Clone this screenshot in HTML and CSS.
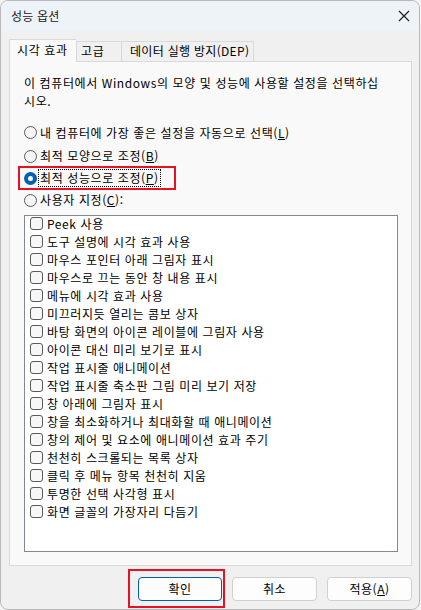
FILE: index.html
```html
<!DOCTYPE html>
<html lang="ko">
<head>
<meta charset="utf-8">
<link rel="stylesheet" href="styles.css">
</head>
<body>
<div class="window">
  <div class="titlebar">
    <span class="title">성능 옵션</span>
    <svg class="close" width="12" height="12" viewBox="0 0 12 12"><path d="M1 1L11 11M11 1L1 11" stroke="#1a1a1a" stroke-width="1.1" fill="none"/></svg>
  </div>
  <div class="content">
    <div class="tabs">
      <div class="tab active">시각 효과</div>
      <div class="tab t2">고급</div>
      <div class="tab t3">데이터 실행 방지(DEP)</div>
    </div>
    <div class="panel">
      <p class="desc">이 컴퓨터에서 Windows의 모양 및 성능에 사용할 설정을 선택하십<br>시오.</p>
      <div class="radios">
        <div class="radio"><span class="dot"></span><span class="lbl">내 컴퓨터에 가장 좋은 설정을 자동으로 선택(<u>L</u>)</span></div>
        <div class="radio"><span class="dot"></span><span class="lbl">최적 모양으로 조정(<u>B</u>)</span></div>
        <div class="radio sel"><span class="dot on"></span><span class="lbl focus">최적 성능으로 조정(<u>P</u>)</span><span class="redbox"></span></div>
        <div class="radio"><span class="dot"></span><span class="lbl">사용자 지정(<u>C</u>):</span></div>
      </div>
      <div class="list">
        <div class="item"><span class="cb"></span>Peek 사용</div>
        <div class="item"><span class="cb"></span>도구 설명에 시각 효과 사용</div>
        <div class="item"><span class="cb"></span>마우스 포인터 아래 그림자 표시</div>
        <div class="item"><span class="cb"></span>마우스로 끄는 동안 창 내용 표시</div>
        <div class="item"><span class="cb"></span>메뉴에 시각 효과 사용</div>
        <div class="item"><span class="cb"></span>미끄러지듯 열리는 콤보 상자</div>
        <div class="item"><span class="cb"></span>바탕 화면의 아이콘 레이블에 그림자 사용</div>
        <div class="item"><span class="cb"></span>아이콘 대신 미리 보기로 표시</div>
        <div class="item"><span class="cb"></span>작업 표시줄 애니메이션</div>
        <div class="item"><span class="cb"></span>작업 표시줄 축소판 그림 미리 보기 저장</div>
        <div class="item"><span class="cb"></span>창 아래에 그림자 표시</div>
        <div class="item"><span class="cb"></span>창을 최소화하거나 최대화할 때 애니메이션</div>
        <div class="item"><span class="cb"></span>창의 제어 및 요소에 애니메이션 효과 주기</div>
        <div class="item"><span class="cb"></span>천천히 스크롤되는 목록 상자</div>
        <div class="item"><span class="cb"></span>클릭 후 메뉴 항목 천천히 지움</div>
        <div class="item"><span class="cb"></span>투명한 선택 사각형 표시</div>
        <div class="item"><span class="cb"></span>화면 글꼴의 가장자리 다듬기</div>
      </div>
    </div>
    <div class="buttons">
      <div class="btn primary">확인<span class="redbox2"></span></div>
      <div class="btn">취소</div>
      <div class="btn">적용(<u>A</u>)</div>
    </div>
  </div>
</div>
</body>
</html>
```

FILE: styles.css
```css
* { box-sizing: border-box; }
html, body { margin: 0; padding: 0; }
body {
  width: 421px;
  height: 610px;
  background: #f4f4f4;
  font-family: "Noto Sans CJK KR", "Noto Sans", sans-serif;
  font-size: 12px;
  color: #000;
  overflow: hidden;
}
.window {
  width: 420px;
  height: 610px;
  border: 1px solid #b9b9b9;
  border-radius: 8px;
  background: #f0f0f0;
  overflow: hidden;
  display: flex;
  flex-direction: column;
}
.titlebar {
  height: 30px;
  flex: none;
  background: #eef2f9;
  display: flex;
  align-items: center;
  justify-content: space-between;
  padding: 0 8px 0 10px;
}
.title { font-size: 12px; line-height: 16px; color: #1a1a1a; letter-spacing: 0.2px; }
.close { margin-right: 1px; }
.content { padding: 8px 8px 0 8px; display: flex; flex-direction: column; flex: 1; }
.tabs { display: flex; height: 22px; align-items: flex-end; position: relative; z-index: 1; letter-spacing: 0.6px; }
.tab {
  height: 20px;
  border: 1px solid #d9d9d9;
  border-bottom: none;
  background: #f0f0f0;
  line-height: 18px;
  padding: 0 6px;
  color: #000;
  white-space: nowrap;
}
.tab.active {
  height: 23px;
  margin-bottom: -1px;
  background: #f9f9f9;
  width: 67px;
  padding-left: 7px;
  line-height: 20px;
  border-right: none;
}
.tab.t2 { width: 46px; padding-left: 4px; }
.tab.t3 { width: 132px; border-left: none; padding-left: 8px; letter-spacing: 0.3px; }
.panel {
  height: 505px;
  width: 403px;
  border: 1px solid #d9d9d9;
  background: #f9f9f9;
  padding: 12px 13px 0 14px;
  letter-spacing: 0.6px;
}
.desc { margin: 0; line-height: 18px; white-space: nowrap; }
.radios { margin-top: 10px; }
.radio { display: flex; align-items: center; height: 22px; position: relative; white-space: nowrap; }
.radio:first-child { height: 25px; }
.dot {
  width: 13px; height: 13px;
  border: 1px solid #5a5a5a;
  border-radius: 50%;
  background: #f5f5f5;
  margin-right: 3px;
  flex: none;
}
.dot.on {
  border: 4px solid #005fb8;
  background: #fff;
}
.lbl { line-height: 16px; }
.lbl.focus { outline: 1px dotted #000; outline-offset: 0px; padding: 0 1px; margin-left: -1px; }
.redbox {
  position: absolute;
  left: -6px; top: -1px;
  width: 158px; height: 24px;
  border: 2px solid #e81123;
}
.list {
  margin-top: 4px;
  width: 374px;
  height: 337px;
  border: 1px solid #828790;
  background: #fff;
  padding: 0 0 0 5px;
}
.item { display: flex; align-items: center; height: 18px; line-height: 16px; white-space: nowrap; padding-bottom: 3px; }
.cb {
  width: 13px; height: 13px;
  border: 1px solid #5a5a5a;
  border-radius: 3px;
  background: #f7f7f7;
  margin-right: 4px;
  flex: none;
}
.buttons {
  display: flex;
  justify-content: flex-end;
  gap: 10px;
  padding: 11px 0 0 0;
  margin-right: -1px;
}
.btn {
  width: 85px;
  height: 24px;
  border: 1px solid #d0d0d0;
  border-radius: 4px;
  background: #fdfdfd;
  text-align: center;
  line-height: 22px;
  position: relative;
  letter-spacing: 0.5px;
}
.btn.primary { border: 1px solid #005fb8; width: 84px; }
.redbox2 {
  position: absolute;
  left: -11px; top: -9px;
  width: 97px; height: 39px;
  border: 2px solid #e81123;
}
u { text-decoration: underline; text-underline-offset: 1px; }
```
